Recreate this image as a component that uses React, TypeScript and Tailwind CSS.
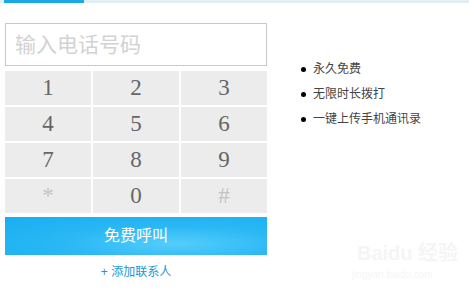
import React from "react";

const keys = ["1", "2", "3", "4", "5", "6", "7", "8", "9", "*", "0", "#"];
const features = ["永久免费", "无限时长拨打", "一键上传手机通讯录"];

export default function App() {
  return (
    <div
      className="relative w-[469px] h-[293px] overflow-hidden bg-white"
      style={{ fontFamily: '"Liberation Sans", "Noto Sans CJK SC", sans-serif' }}
    >
      <div className="flex h-[3px]">
        <div className="w-[4px] bg-[#e2eef4]" />
        <div className="w-[80px] bg-[#1aa9e6]" />
        <div className="flex-1 bg-[#e2eef4]" />
      </div>

      <div className="flex pt-[20px] pl-[5px]">
        <div className="w-[262px]">
          <div className="h-[43px] border border-[#c9c9c9] flex items-center pl-[9px] text-[21px] text-[#d2d2d2]">
            输入电话号码
          </div>

          <div className="grid grid-cols-3 gap-x-[2px] gap-y-[2px] mt-[5px]">
            {keys.map((k) => (
              <div
                key={k}
                className={`h-[34px] bg-[#ececec] flex items-center justify-center text-[23px] ${
                  k === "*" || k === "#" ? "text-[#c4c4c4]" : "text-[#666]"
                }`}
                style={{ fontFamily: '"Liberation Serif", "DejaVu Serif", serif' }}
              >
                {k}
              </div>
            ))}
          </div>

          <div className="mt-[4px] h-[38px] flex items-center justify-center text-white text-[16px] bg-[radial-gradient(ellipse_at_65%_70%,#55cdfb_0%,#2bb8f5_45%,#17aef0_100%)]">
            免费呼叫
          </div>

          <div className="mt-[8px] text-center text-[12px] text-[#1a96d4]">
            + 添加联系人
          </div>
        </div>

        <ul className="ml-[34px] mt-[38px] flex flex-col gap-[9px]">
          {features.map((f) => (
            <li key={f} className="flex items-center text-[12px] text-[#444] h-[16px]">
              <span className="w-[5px] h-[5px] rounded-full bg-black mr-[7px]" />
              {f}
            </li>
          ))}
        </ul>
      </div>

      <div className="absolute left-[357px] top-[243px] text-[#f5f5f5] text-[20px] font-bold leading-none">
        Baidu 经验
      </div>
      <div className="absolute left-[352px] top-[270px] text-[#f5f5f5] text-[10px] leading-none">
        jingyan.baidu.com
      </div>
    </div>
  );
}
